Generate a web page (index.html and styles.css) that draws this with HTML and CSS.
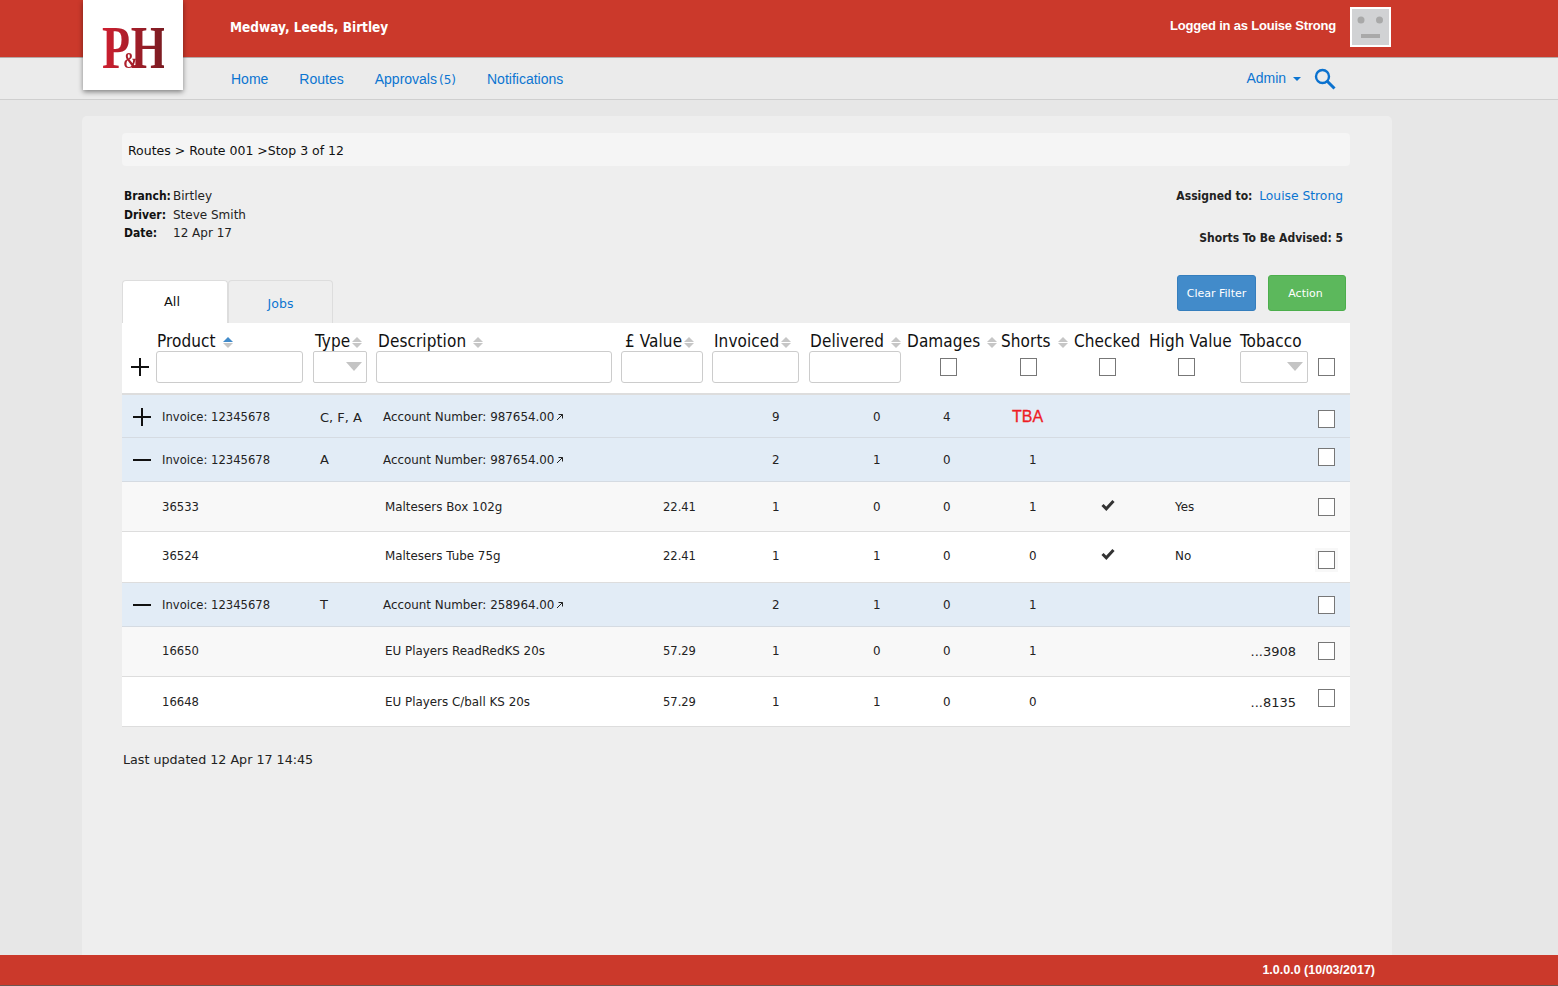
FILE: index.html
```html
<!DOCTYPE html>
<html lang="en">
<head>
    <meta charset="UTF-8">
    <meta name="viewport" content="width=device-width, initial-scale=1.0">
    <title>Route 001 - Stop 3 of 12</title>
    <link rel="stylesheet" href="styles.css">
</head>
<body>
    <div class="logo"><span class="logo-text">P<span class="logo-amp">&amp;</span>H</span></div>

    <header class="topbar">
        <div class="branches">Medway, Leeds, Birtley</div>
        <div class="user">
            <span class="user-name">Logged in as Louise Strong</span>
            <svg class="avatar" width="41" height="40" viewBox="0 0 41 40">
                <rect x="1" y="1" width="39" height="38" fill="#d1d2d4" stroke="#fff" stroke-width="2"/>
                <circle cx="11" cy="13" r="3.5" fill="#a9a9a9"/>
                <circle cx="29.5" cy="13" r="3.5" fill="#a9a9a9"/>
                <rect x="11" y="27" width="19" height="4" fill="#a9a9a9"/>
            </svg>
        </div>
    </header>

    <nav class="navbar">
        <div class="nav-links">
            <a href="#">Home</a>
            <a href="#">Routes</a>
            <a href="#">Approvals<span class="count">(5)</span></a>
            <a href="#">Notifications</a>
        </div>
        <div class="nav-right">
            <a href="#" class="admin">Admin <span class="caret"></span></a>
            <svg width="22" height="22" viewBox="0 0 22 22" fill="none" stroke="#0b72cf">
                <circle cx="8.5" cy="8.5" r="6.5" stroke-width="2.4"/>
                <path d="M13 13l7.5 7.5" stroke-width="3"/>
            </svg>
        </div>
    </nav>

    <main class="panel">
        <div class="breadcrumb">Routes &gt; Route 001 &gt;Stop 3 of 12</div>

        <section class="info">
            <dl class="info-list">
                <div><dt>Branch:</dt><dd>Birtley</dd></div>
                <div><dt>Driver:</dt><dd>Steve Smith</dd></div>
                <div><dt>Date:</dt><dd>12 Apr 17</dd></div>
            </dl>
            <div class="info-right">
                <p><b>Assigned to:</b> <a href="#">Louise Strong</a></p>
                <p class="advised"><b>Shorts To Be Advised: 5</b></p>
            </div>
        </section>

        <div class="toolbar">
            <div class="tabs">
                <div class="tab active">All</div>
                <div class="tab"><a href="#">Jobs</a></div>
            </div>
            <div class="actions">
                <button class="btn btn-blue">Clear Filter</button>
                <button class="btn btn-green">Action</button>
            </div>
        </div>

        <table class="grid">
            <colgroup>
                <col class="c-toggle"><col class="c-product"><col class="c-type"><col class="c-desc">
                <col class="c-value"><col class="c-inv"><col class="c-del"><col class="c-dam">
                <col class="c-short"><col class="c-chk"><col class="c-high"><col class="c-tob"><col class="c-box">
            </colgroup>
            <thead>
                <tr class="titles">
                    <th></th>
                    <th><span class="pl1">Product</span> <i class="sort asc"></i></th>
                    <th><span class="pl2">Type</span><i class="sort"></i></th>
                    <th><span class="pl2">Description</span> <i class="sort"></i></th>
                    <th><span class="pl4">£ Value</span><i class="sort"></i></th>
                    <th><span class="pl2">Invoiced</span><i class="sort"></i></th>
                    <th><span class="pl1">Delivered</span> <i class="sort"></i></th>
                    <th>Damages <i class="sort"></i></th>
                    <th>Shorts <i class="sort"></i></th>
                    <th>Checked</th>
                    <th>High Value</th>
                    <th>Tobacco</th>
                    <th></th>
                </tr>
                <tr class="filters">
                    <th class="toggle-head">
                        <svg width="20" height="20" viewBox="0 0 20 20"><path d="M10 1v18M1 10h18" stroke="#111" stroke-width="2"/></svg>
                    </th>
                    <th><input class="f" type="text"></th>
                    <th><span class="select s-type"><select></select></span></th>
                    <th><input class="f" type="text"></th>
                    <th><input class="f f-value" type="text"></th>
                    <th><input class="f f-inv" type="text"></th>
                    <th><input class="f f-del" type="text"></th>
                    <th class="mid"><input class="cb" type="checkbox"></th>
                    <th class="mid s"><input class="cb" type="checkbox"></th>
                    <th class="mid s3"><input class="cb" type="checkbox"></th>
                    <th class="mid s2"><input class="cb" type="checkbox"></th>
                    <th><span class="select s-tob"><select></select></span></th>
                    <th class="box"><input class="cb" type="checkbox"></th>
                </tr>
            </thead>
            <tbody>
                <tr class="group r42 low3">
                    <td class="toggle"><svg width="20" height="20" viewBox="0 0 20 20"><path d="M10 1v18M1 10h18" stroke="#111" stroke-width="2"/></svg></td>
                    <td>Invoice: 12345678</td><td class="type">C, F, A</td>
                    <td>Account Number: 987654.00<svg class="ext" width="8" height="8" viewBox="0 0 8 8" fill="none" stroke="#222"><path d="M1 7l5.5-5.5M2.5 1.5h4v4"/></svg></td>
                    <td></td><td>9</td><td>0</td><td>4</td><td class="tba">TBA</td><td></td><td></td><td></td>
                    <td class="box"><input class="cb down" type="checkbox"></td>
                </tr>
                <tr class="group r43 low2">
                    <td class="toggle"><svg width="20" height="20" viewBox="0 0 20 20"><path d="M1 10h18" stroke="#111" stroke-width="2"/></svg></td>
                    <td>Invoice: 12345678</td><td class="type">A</td>
                    <td>Account Number: 987654.00<svg class="ext" width="8" height="8" viewBox="0 0 8 8" fill="none" stroke="#222"><path d="M1 7l5.5-5.5M2.5 1.5h4v4"/></svg></td>
                    <td></td><td>2</td><td>1</td><td>0</td><td>1</td><td></td><td></td><td></td>
                    <td class="box"><input class="cb up" type="checkbox"></td>
                </tr>
                <tr class="item alt r49 low2">
                    <td></td><td>36533</td><td></td><td>Maltesers Box 102g</td><td>22.41</td>
                    <td>1</td><td>0</td><td>0</td><td>1</td>
                    <td class="tick"><svg width="14" height="12" viewBox="0 0 14 12" fill="none" stroke="#333" stroke-width="3"><path d="M1.5 6l3.8 3.8L12.5 2"/></svg></td>
                    <td>Yes</td><td></td>
                    <td class="box"><input class="cb" type="checkbox"></td>
                </tr>
                <tr class="item r50 high2">
                    <td></td><td>36524</td><td></td><td>Maltesers Tube 75g</td><td>22.41</td>
                    <td>1</td><td>1</td><td>0</td><td>0</td>
                    <td class="tick"><svg width="14" height="12" viewBox="0 0 14 12" fill="none" stroke="#333" stroke-width="3"><path d="M1.5 6l3.8 3.8L12.5 2"/></svg></td>
                    <td>No</td><td></td>
                    <td class="box"><input class="cb down2 halo" type="checkbox"></td>
                </tr>
                <tr class="group r43 low2">
                    <td class="toggle"><svg width="20" height="20" viewBox="0 0 20 20"><path d="M1 10h18" stroke="#111" stroke-width="2"/></svg></td>
                    <td>Invoice: 12345678</td><td class="type">T</td>
                    <td>Account Number: 258964.00<svg class="ext" width="8" height="8" viewBox="0 0 8 8" fill="none" stroke="#222"><path d="M1 7l5.5-5.5M2.5 1.5h4v4"/></svg></td>
                    <td></td><td>2</td><td>1</td><td>0</td><td>1</td><td></td><td></td><td></td>
                    <td class="box"><input class="cb" type="checkbox"></td>
                </tr>
                <tr class="item alt r49">
                    <td></td><td>16650</td><td></td><td>EU Players ReadRedKS 20s</td><td>57.29</td>
                    <td>1</td><td>0</td><td>0</td><td>1</td><td></td><td></td><td class="tob">...3908</td>
                    <td class="box"><input class="cb" type="checkbox"></td>
                </tr>
                <tr class="item r49 low2">
                    <td></td><td>16648</td><td></td><td>EU Players C/ball KS 20s</td><td>57.29</td>
                    <td>1</td><td>1</td><td>0</td><td>0</td><td></td><td></td><td class="tob">...8135</td>
                    <td class="box"><input class="cb up2" type="checkbox"></td>
                </tr>
            </tbody>
        </table>

        <p class="updated">Last updated 12 Apr 17 14:45</p>
    </main>

    <footer class="footer">1.0.0.0 (10/03/2017)</footer>
</body>
</html>
```

FILE: styles.css
```css
/* Basic Reset */
* {
    margin: 0;
    padding: 0;
    box-sizing: border-box;
}
html, body {
    height: 986px;
    overflow: hidden;
}
body {
    display: flex;
    flex-direction: column;
    font-family: "DejaVu Sans", sans-serif;
    font-size: 12px;
    color: #222;
    background-color: #e7e7e7;
}
a {
    color: #0b75d1;
    text-decoration: none;
}
b, dt {
    font-stretch: condensed;
}

/* Logo sits over both bars */
.logo {
    position: absolute;
    left: 83px;
    top: 0;
    width: 100px;
    height: 90px;
    background: #fff;
    box-shadow: 0 2px 5px rgba(0, 0, 0, 0.45);
    display: flex;
    justify-content: center;
    padding-top: 18px;
}
.logo-text {
    display: inline-block;
    height: 58px;
    font-family: "Liberation Serif", serif;
    font-size: 62px;
    font-weight: bold;
    line-height: 58px;
    letter-spacing: -3px;
    color: #a8202c;
    background: linear-gradient(90deg, #cf1f30, #7a1c22);
    -webkit-background-clip: text;
    background-clip: text;
    -webkit-text-fill-color: transparent;
    transform: scaleX(0.74);
}
.logo-amp {
    font-size: 23px;
    margin: 0 -6px 0 -6px;
}

/* Top bars */
.topbar {
    height: 58px;
    flex: none;
    background: #cb392b;
    border-bottom: 1px solid #b5a9a7;
    display: flex;
    justify-content: space-between;
    padding: 0 167px 0 230px;
    color: #fff;
}
.branches {
    font-size: 13.5px;
    font-weight: bold;
    font-stretch: condensed;
    line-height: 54px;
}
.user {
    display: flex;
    align-items: flex-start;
    padding-top: 7px;
    gap: 14px;
}
.user-name {
    font-family: "Liberation Sans", Arial, sans-serif;
    font-size: 13px;
    font-weight: bold;
    letter-spacing: -0.2px;
    line-height: 38px;
}
.navbar {
    height: 42px;
    flex: none;
    background: #ebebeb;
    border-bottom: 1px solid #cfcfcf;
    display: flex;
    justify-content: space-between;
    padding: 0 222px 0 231px;
    font-family: "Liberation Sans", Arial, sans-serif;
    font-size: 14px;
}
.nav-links {
    display: flex;
    gap: 31px;
    line-height: 42px;
}
.count {
    font-family: "DejaVu Sans", sans-serif;
    font-size: 12px;
    margin-left: 2px;
}
.nav-right {
    display: flex;
    gap: 13px;
    align-items: center;
}
.admin {
    margin-top: -2px;
}
.caret {
    display: inline-block;
    margin-left: 3px;
    vertical-align: 2px;
    border-left: 4px solid transparent;
    border-right: 4px solid transparent;
    border-top: 4px solid #0b75d1;
}

/* Main panel */
.panel {
    flex: 1;
    width: 1310px;
    margin: 16px 0 0 82px;
    padding: 17px 42px 0 40px;
    background: #eee;
    border-radius: 5px 5px 0 0;
}
.breadcrumb {
    height: 33px;
    line-height: 35px;
    padding-left: 6px;
    font-size: 12.5px;
    background: #f5f5f5;
    border-radius: 4px;
    color: #111;
}
.info {
    display: flex;
    justify-content: space-between;
    padding: 21px 7px 0 2px;
    height: 109px;
    line-height: 18.5px;
}
.info-list div {
    display: flex;
}
.info-list dt {
    width: 49px;
    font-weight: bold;
    color: #111;
}
.info-right {
    text-align: right;
}
.info-right a {
    margin-left: 3px;
    font-size: 12.3px;
}
.advised {
    margin-top: 23px;
}
.toolbar {
    display: flex;
    justify-content: space-between;
    height: 48px;
}
.tabs {
    display: flex;
    padding-top: 5px;
}
.tab {
    width: 105px;
    height: 43px;
    text-align: center;
    line-height: 45px;
    font-size: 12.5px;
    border: 1px solid #ddd;
    border-bottom: none;
    border-radius: 4px 4px 0 0;
}
.tab.active {
    width: 106px;
    padding-right: 6px;
    font-size: 13px;
    line-height: 41px;
    background: #fff;
    color: #111;
}
.actions {
    display: flex;
    gap: 12px;
    padding-right: 4px;
}
.btn {
    width: 79px;
    height: 36px;
    font-family: inherit;
    font-size: 11px;
    color: #fff;
    border-radius: 3px;
    cursor: pointer;
}
.btn-blue {
    background: #428bca;
    border: 1px solid #357ebd;
}
.btn-green {
    width: 78px;
    padding-right: 3px;
    background: #5cb85c;
    border: 1px solid #4cae4c;
}

/* Table */
.grid {
    width: 1228px;
    table-layout: fixed;
    border-collapse: collapse;
    background: #fff;
}
.c-toggle { width: 34px; }
.c-product { width: 157px; }
.c-type { width: 63px; }
.c-desc { width: 245px; }
.c-value { width: 91px; }
.c-inv { width: 97px; }
.c-del { width: 98px; }
.c-dam { width: 94px; }
.c-short { width: 73px; }
.c-chk { width: 75px; }
.c-high { width: 91px; }
.c-tob { width: 74px; }
.c-box { width: 36px; }

thead {
    border-bottom: 2px solid #ddd;
}
.titles th {
    height: 28px;
    padding-top: 8px;
    text-align: left;
    font-size: 17px;
    font-stretch: condensed;
    font-weight: normal;
    letter-spacing: 0.1px;
    color: #111;
    white-space: nowrap;
}
.pl1 { padding-left: 1px; }
.pl2 { padding-left: 2px; }
.pl4 { padding-left: 4px; }
.filters th {
    height: 42px;
    padding-bottom: 10px;
    text-align: left;
    vertical-align: middle;
}
.toggle-head {
    padding-left: 8px;
}
.toggle-head svg {
    display: block;
}
.f {
    display: block;
    width: 147px;
    height: 32px;
    border: 1px solid #ccc;
    border-radius: 3px;
    background: #fff;
}
.grid th:nth-child(4) .f { width: 236px; }
.f-value { width: 82px; }
.f-inv { width: 87px; }
.f-del { width: 92px; }
.select {
    display: block;
    position: relative;
    height: 32px;
}
.select select {
    appearance: none;
    display: block;
    width: 100%;
    height: 100%;
    border: 1px solid #ccc;
    border-radius: 2px;
    background: #fff;
}
.select::after {
    content: "";
    position: absolute;
    right: 5px;
    top: 11px;
    border-left: 8px solid transparent;
    border-right: 8px solid transparent;
    border-top: 9px solid #c4c4c4;
}
.s-type { width: 54px; }
.s-tob { width: 68px; }
.grid .mid { padding-left: 33px; }
.grid .mid.s { padding-left: 19px; }
.grid .mid.s3 { padding-left: 25px; }
.grid .mid.s2 { padding-left: 29px; }
.grid .box { padding-left: 4px; }
.cb {
    appearance: none;
    display: block;
    width: 17px;
    height: 18px;
    background: #fff;
    border: 1px solid #777;
}
.cb.down { margin-top: 4px; }
.cb.down2 { margin-top: 8px; }
.cb.up { margin-top: -6px; }
.cb.up2 { margin-top: -8px; }
.cb.halo { box-shadow: 0 0 0 3px #f8f8f8; }

/* Sort arrows */
.sort {
    display: inline-block;
    position: relative;
    width: 10px;
    height: 11px;
    margin-left: 2px;
    vertical-align: -1px;
}
.sort::before, .sort::after {
    content: "";
    position: absolute;
    left: 0;
    border-left: 5px solid transparent;
    border-right: 5px solid transparent;
}
.sort::before {
    top: 0;
    border-bottom: 5px solid #c6c6c6;
}
.sort::after {
    bottom: 0;
    border-top: 5px solid #c6c6c6;
}
.sort.asc::before {
    border-bottom-color: #428bca;
}

/* Rows */
tbody tr {
    border-bottom: 1px solid #ddd;
}
tbody td {
    white-space: nowrap;
    font-size: 11.9px;
    color: #222;
}
.r42 { height: 43px; }
.r43 { height: 44px; }
.r49 { height: 50px; }
.r50 { height: 51px; }
.low3 td { padding-top: 3px; }
.low2 td { padding-top: 2px; }
.high2 td { padding-bottom: 2px; }
.r43 .type { padding-bottom: 2px; }
.group {
    background: #e2ecf6;
    border-bottom-color: #d5dbe2;
}
.alt {
    background: #f8f8f8;
}
.toggle {
    padding-left: 10px;
}
.toggle svg {
    display: block;
}
tbody td:nth-child(2) { padding-left: 6px; font-size: 11.6px; }
tbody td:nth-child(3) { padding-left: 7px; font-size: 13px; }
tbody td:nth-child(4) { padding-left: 7px; }
.item td:nth-child(4) { padding-left: 9px; }
tbody td:nth-child(5) { padding-left: 42px; font-size: 11.5px; }
tbody td:nth-child(6) { padding-left: 60px; }
tbody td:nth-child(7) { padding-left: 64px; }
tbody td:nth-child(8) { padding-left: 36px; }
tbody td:nth-child(9) { padding-left: 28px; }
tbody td:nth-child(11) { padding-left: 26px; }
tbody td.tba {
    padding-left: 11px;
    font-family: "Liberation Sans", Arial, sans-serif;
    font-size: 16px;
    color: #ee1c25;
    -webkit-text-stroke: 0.3px #ee1c25;
}
.tick svg {
    display: block;
    margin: -4px 0 0 27px;
}
tbody td.tob {
    text-align: right;
    padding-right: 18px;
    font-size: 13px;
}
.ext {
    margin-left: 2px;
}
.updated {
    margin-top: 25px;
    padding-left: 1px;
    font-size: 12.7px;
    color: #222;
}

.footer {
    height: 31px;
    flex: none;
    background: #cb392b;
    border-bottom: 1px solid #6e5650;
    color: #fff;
    text-align: right;
    padding-right: 183px;
    font-family: "Liberation Sans", Arial, sans-serif;
    font-size: 12.5px;
    font-weight: bold;
    line-height: 30px;
}
```
